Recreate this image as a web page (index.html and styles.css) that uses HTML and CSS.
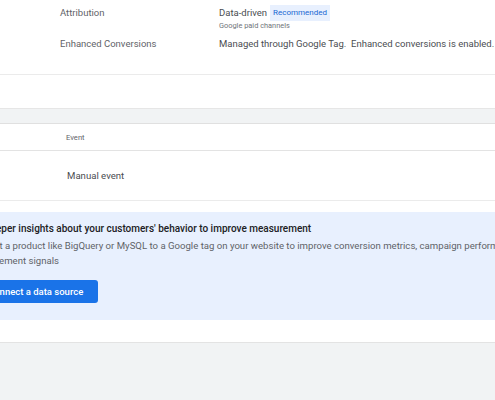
FILE: index.html
```html
<!DOCTYPE html>
<html lang="en">
<head>
    <meta charset="UTF-8">
    <meta name="viewport" content="width=device-width, initial-scale=1.0">
    <title>Conversion settings</title>
    <link rel="stylesheet" href="styles.css">
</head>
<body>
    <div class="settings">
        <div class="settings-row">
            <div class="settings-label">Attribution</div>
            <div class="settings-value">
                <div class="value-line">Data-driven <span class="badge">Recommended</span></div>
                <div class="value-sub">Google paid channels</div>
            </div>
        </div>
        <div class="settings-row second">
            <div class="settings-label">Enhanced Conversions</div>
            <div class="settings-value">Managed through Google Tag.&nbsp; Enhanced conversions is enabled.</div>
        </div>
    </div>

    <div class="spacer"></div>

    <div class="table">
        <div class="table-band"></div>
        <div class="table-head">Event</div>
        <div class="table-row">Manual event</div>
    </div>

    <div class="promo">
        <div class="promo-inner">
            <div class="promo-title">Get deeper insights about your customers' behavior to improve measurement</div>
            <div class="promo-text">Connect a product like BigQuery or MySQL to a Google tag on your website to improve conversion metrics, campaign performance, and other<br>measurement signals</div>
            <button class="promo-button">Connect a data source</button>
        </div>
    </div>

    <div class="footer"></div>
</body>
</html>
```

FILE: styles.css
```css
body {
    margin: 0;
    overflow: hidden;
    background: #fff;
    font-family: Roboto, "Liberation Sans", sans-serif;
    color: #5f6368;
}

.settings {
    padding: 5px 0 22px 60px;
    border-bottom: 1px solid #ebebeb;
}

.settings-row {
    display: grid;
    grid-template-columns: 159px 1fr;
    font-size: 9.5px;
    line-height: 16px;
}

.settings-row.second {
    margin-top: 5px;
}

.settings-value {
    color: #4a4d51;
    white-space: nowrap;
}

.value-line {
    display: flex;
    align-items: center;
    gap: 3px;
}

.badge {
    background: #e8f0fe;
    color: #1967d2;
    font-size: 8px;
    line-height: 16px;
    padding: 0 3px;
}

.value-sub {
    font-size: 7.4px;
    line-height: 10px;
    color: #70757a;
}

.spacer {
    height: 33px;
}

.table-band {
    height: 14px;
    background: #f1f3f4;
    border-top: 1px solid #e6e6e6;
    border-bottom: 1px solid #e0e0e0;
}

.table-head {
    height: 26px;
    line-height: 28px;
    padding-left: 66px;
    font-size: 7.6px;
    color: #5f6368;
    border-bottom: 1px solid #e3e3e3;
}

.table-row {
    height: 49px;
    line-height: 49px;
    padding-left: 67px;
    font-size: 9.6px;
    color: #4a4d51;
    border-bottom: 1px solid #ebebeb;
}

.promo {
    margin-top: 11px;
    background: #e8f0fe;
    padding: 10px 0 17px;
}

.promo-inner {
    margin-left: -33px;
    white-space: nowrap;
}

.promo-title {
    font-size: 10px;
    font-weight: 500;
    line-height: 14px;
    color: #202124;
}

.promo-text {
    margin-top: 2px;
    font-size: 9.6px;
    line-height: 15px;
    color: #5f6368;
}

.promo-button {
    display: block;
    margin: 12px 0 0 6px;
    height: 23px;
    padding: 0 15px;
    border: none;
    border-radius: 3px;
    background: #1a73e8;
    color: #fff;
    font-family: Roboto, "Liberation Sans", sans-serif;
    font-size: 9.5px;
    font-weight: 500;
}

.footer {
    margin-top: 22px;
    height: 80px;
    background: #f1f3f4;
    border-top: 1px solid #e3e3e3;
}
```
